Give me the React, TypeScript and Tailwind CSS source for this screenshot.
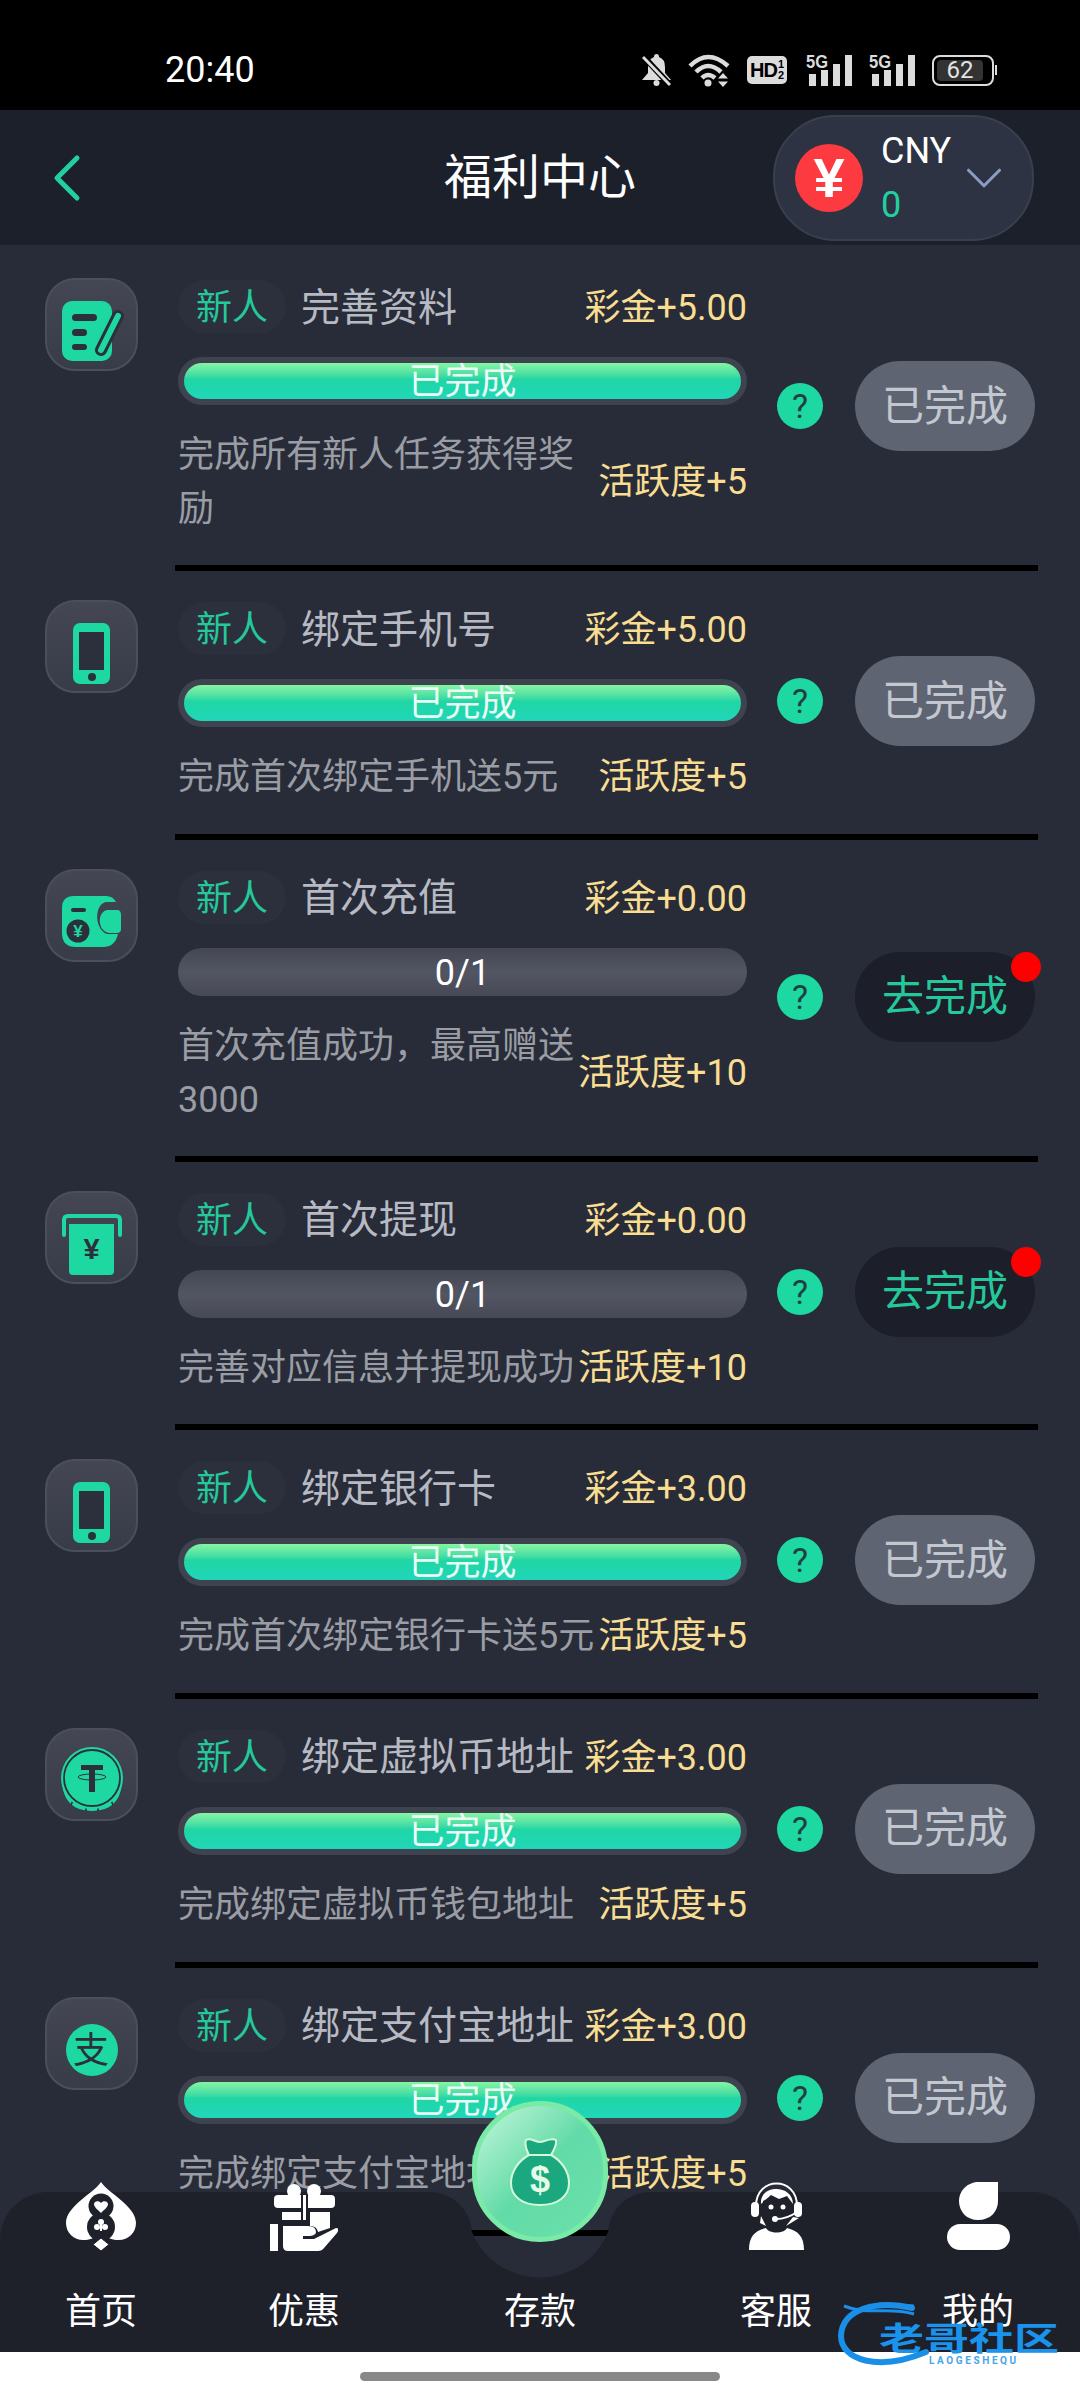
import { ChevronLeft, ChevronDown } from "lucide-react";
import type { ReactNode } from "react";

const GREEN = "#1ed8a2";
const DARK = "#2b303c";

const font = "font-['Roboto','Noto_Sans_CJK_SC',sans-serif]";

const DocIcon = () => (
  <svg viewBox="0 0 93 93" className="w-full h-full">
    <rect x="17" y="23" width="50" height="60" rx="10" fill={GREEN} />
    <rect x="27" y="36" width="25" height="7" rx="3.5" fill={DARK} />
    <rect x="27" y="51" width="15" height="7" rx="3.5" fill={DARK} />
    <rect x="27" y="66" width="15" height="6" rx="3" fill={DARK} />
    <path d="M73 38 L56 72" stroke={DARK} strokeWidth="12" strokeLinecap="round" />
    <path d="M73 38 L56 72" stroke={GREEN} strokeWidth="6" strokeLinecap="round" />
  </svg>
);

const PhoneIcon = () => (
  <svg viewBox="0 0 93 93" className="w-full h-full">
    <rect x="28" y="23" width="37" height="61" rx="7" fill={GREEN} />
    <rect x="34" y="32" width="25" height="38" fill={DARK} />
    <circle cx="47" cy="77" r="4" fill={DARK} />
  </svg>
);

const WalletIcon = () => (
  <svg viewBox="0 0 93 93" className="w-full h-full">
    <path
      d="M29 27 H61 Q68 27 71 33 H62 C50 33 48 59 62 65 H73 Q70 78 58 78 H31 Q17 78 17 64 V39 Q17 27 29 27Z"
      fill={GREEN}
    />
    <rect x="26" y="39" width="15" height="4" rx="2" fill={DARK} />
    <circle cx="33" cy="62" r="14" fill={GREEN} />
    <circle cx="33" cy="62" r="11.5" fill={DARK} />
    <text x="33" y="68" textAnchor="middle" fontSize="17" fontWeight="700" fill={GREEN} fontFamily="Liberation Sans">
      ¥
    </text>
    <path d="M62 41 H72 Q76 41 76 46 V60 Q76 64 72 64 H64 C52 62 52 43 62 41Z" fill={GREEN} />
  </svg>
);

const AtmIcon = () => (
  <svg viewBox="0 0 93 93" className="w-full h-full">
    <path
      d="M19 44 V29 Q19 25 23 25 H71 Q75 25 75 29 V44"
      fill="none"
      stroke={GREEN}
      strokeWidth="4"
      strokeLinecap="round"
    />
    <path d="M24 33 H69 V80 Q69 84 65 84 H28 Q24 84 24 80Z" fill={GREEN} />
    <text x="46.5" y="68" textAnchor="middle" fontSize="29" fontWeight="700" fill={DARK} fontFamily="Liberation Sans">
      ¥
    </text>
  </svg>
);

const TetherIcon = () => (
  <svg viewBox="0 0 93 93" className="w-full h-full">
    <path d="M17 56 Q20 83 47 83 Q74 83 77 56Z" fill={GREEN} />
    <path d="M29 70 L26 77 M41 75 V83 M53 75 V83 M65 70 L68 77" stroke={DARK} strokeWidth="1.6" />
    <circle cx="47" cy="50" r="31" fill={GREEN} />
    <circle cx="47" cy="50" r="28" fill="none" stroke={DARK} strokeWidth="1.8" />
    <rect x="36" y="37" width="22" height="5" fill={DARK} />
    <rect x="44" y="37" width="6" height="27" fill={DARK} />
    <ellipse cx="47" cy="49" rx="14" ry="3" fill="none" stroke={DARK} strokeWidth="1" />
  </svg>
);

const AlipayIcon = () => (
  <svg viewBox="0 0 93 93" className="w-full h-full">
    <circle cx="47" cy="53" r="26" fill={GREEN} />
    <text x="46" y="66" textAnchor="middle" fontSize="36" fill={DARK} fontFamily="Noto Sans CJK SC">
      支
    </text>
  </svg>
);

type Task = {
  title: string;
  bonus: string;
  desc: string;
  active: string;
  done: boolean;
  icon: ReactNode;
  multi?: boolean;
};

const tasks: Task[] = [
  { title: "完善资料", bonus: "彩金+5.00", desc: "完成所有新人任务获得奖励", active: "活跃度+5", done: true, icon: <DocIcon />, multi: true },
  { title: "绑定手机号", bonus: "彩金+5.00", desc: "完成首次绑定手机送5元", active: "活跃度+5", done: true, icon: <PhoneIcon /> },
  { title: "首次充值", bonus: "彩金+0.00", desc: "首次充值成功，最高赠送3000", active: "活跃度+10", done: false, icon: <WalletIcon />, multi: true },
  { title: "首次提现", bonus: "彩金+0.00", desc: "完善对应信息并提现成功", active: "活跃度+10", done: false, icon: <AtmIcon /> },
  { title: "绑定银行卡", bonus: "彩金+3.00", desc: "完成首次绑定银行卡送5元", active: "活跃度+5", done: true, icon: <PhoneIcon /> },
  { title: "绑定虚拟币地址", bonus: "彩金+3.00", desc: "完成绑定虚拟币钱包地址", active: "活跃度+5", done: true, icon: <TetherIcon /> },
  { title: "绑定支付宝地址", bonus: "彩金+3.00", desc: "完成绑定支付宝地址", active: "活跃度+5", done: true, icon: <AlipayIcon /> },
];

const Progress = ({ done }: { done: boolean }) =>
  done ? (
    <div className="relative h-[48px] rounded-full bg-[#3f4350] p-[6px] mt-[24px]">
      <div className="h-full rounded-full bg-gradient-to-b from-[#84f5a2] via-[#20d6a4] via-45% to-[#20d6b9]" />
      <span className="absolute inset-0 pt-[2px] flex items-center justify-center text-[36px] text-[#eafaf5] leading-none">
        已完成
      </span>
    </div>
  ) : (
    <div className="h-[48px] pt-[2px] rounded-full bg-gradient-to-b from-[#444753] via-[#525562] to-[#474a56] mt-[24px] flex items-center justify-center text-[36px] text-white leading-none">
      0/1
    </div>
  );

const TaskRow = ({ task }: { task: Task }) => (
  <div className="flex pl-[45px]">
    <div className="w-[93px] h-[93px] mt-[29px] shrink-0 rounded-[30px] border-2 border-[#4b4e5b] bg-gradient-to-b from-[#444753] to-[#383b48]">
      <div className="-m-[2px] w-[93px] h-[93px]">{task.icon}</div>
    </div>
    <div
      className={`ml-[37px] w-[863px] pl-[3px] pt-[31px] flex items-center border-b-[6px] border-black ${
        task.multi ? "pb-[29px]" : "pb-[29.67px]"
      }`}
    >
      <div className="w-[569px] shrink-0">
        <div className="flex items-center justify-between h-[53px]">
          <div className="flex items-center">
            <span className="w-[108px] h-[53px] pt-[3px] rounded-full bg-[#2c303c] flex items-center justify-center text-[36px] text-[#25c89b]">
              新人
            </span>
            <span className="ml-[15px] pt-[3px] text-[39px] text-[#b7bac3] leading-none">{task.title}</span>
          </div>
          <span className="pt-[3px] text-[36px] text-[#f8dd92] leading-none">{task.bonus}</span>
        </div>
        <Progress done={task.done} />
        <div className="flex items-center justify-between mt-[23px]">
          <p className="w-[425px] text-[36px] leading-[54px] text-[#9b9da5] break-all">{task.desc}</p>
          <span className="text-[36px] text-[#f8dd92] leading-none whitespace-nowrap">{task.active}</span>
        </div>
      </div>
      <div className="-mt-[4px] ml-[30px] w-[46px] h-[46px] shrink-0 rounded-full bg-[#1ed8a2] flex items-center justify-center text-[34px] text-[#22403f] leading-none">
        ?
      </div>
      {task.done ? (
        <button className="-mt-[4px] ml-[32px] w-[180px] h-[90px] shrink-0 rounded-full bg-[#5f6472] text-[42px] text-[#c3c8d0]">
          已完成
        </button>
      ) : (
        <button className="relative -mt-[4px] ml-[32px] w-[180px] h-[90px] shrink-0 rounded-full bg-[#1c1f2a] text-[42px] text-[#25c89b]">
          去完成
          <span className="absolute right-[-6px] top-0 w-[30px] h-[30px] rounded-full bg-[#ff0000]" />
        </button>
      )}
    </div>
  </div>
);

const StatusIcons = () => (
  <div className="ml-auto flex items-center">
    <svg viewBox="0 0 29 32" className="w-[29px] h-[32px]" fill="#dcdcdc">
      <path d="M14.5 0 Q17 0 17 3 Q23 5 23 13 V19 L29 26 H0 L6 19 V13 Q6 5 12 3 Q12 0 14.5 0Z" />
      <circle cx="14.5" cy="29" r="3" />
      <path d="M1 2 L28 31" stroke="#000" strokeWidth="6" />
      <path d="M1 3 L28 31" stroke="#dcdcdc" strokeWidth="3" />
    </svg>
    <svg viewBox="0 0 42 33" className="ml-[17px] w-[42px] h-[33px]" fill="none" stroke="#dcdcdc" strokeWidth="4.5">
      <path d="M2 12 Q20 -6 40 12" />
      <path d="M8 18 Q20 6 33 18" />
      <path d="M14 24 Q20 18 27 24" />
      <circle cx="20" cy="29" r="3.5" fill="#dcdcdc" stroke="none" />
      <path d="M35 19 L40 24.5 H30Z M30 27.5 H40 L35 33Z" fill="#dcdcdc" stroke="none" />
    </svg>
    <div className="ml-[17px] w-[40px] h-[28px] rounded-[5px] bg-[#dcdcdc] flex items-center justify-center text-black font-bold text-[20px] leading-none tracking-[-1px] font-['Liberation_Sans',sans-serif]">
      HD
      <span className="ml-[1px] flex flex-col text-[11px] leading-[11px] tracking-normal">
        <span>1</span>
        <span>2</span>
      </span>
    </div>
    <Signal className="ml-[19px]" />
    <Signal className="ml-[17px]" />
    <div className="ml-[17px] flex items-center">
      <div className="w-[62px] h-[31px] rounded-[8px] border-2 border-[#dcdcdc] p-[3px]">
        <div className="w-[46px] h-full rounded-[4px] bg-[#333] flex items-center justify-center text-[24px] text-[#e4e4e4] leading-none">
          62
        </div>
      </div>
      <div className="ml-[1px] w-[2px] h-[10px] bg-[#dcdcdc]" />
    </div>
  </div>
);

const Signal = ({ className }: { className: string }) => (
  <svg viewBox="0 0 46 32" className={`${className} w-[46px] h-[32px] overflow-visible`} fill="#dcdcdc">
    <text x="0" y="14" fontSize="18" fontWeight="700" fontFamily="Liberation Sans" textLength="22" lengthAdjust="spacingAndGlyphs">
      5G
    </text>
    <rect x="3" y="20" width="7" height="12" />
    <rect x="15" y="16" width="7" height="16" />
    <rect x="27" y="10" width="7" height="22" />
    <rect x="39" y="1" width="7" height="31" />
  </svg>
);

const SpadeIcon = () => (
  <svg viewBox="0 0 70 70" className="w-[70px] h-[70px]">
    <path
      d="M35 0 C28 11 0 24 0 41 C0 51 8 58 17 58 C24 58 28 56 31 53 H39 C42 56 46 58 53 58 C62 58 70 51 70 41 C70 24 42 11 35 0Z"
      fill="#fff"
    />
    <circle cx="35" cy="24" r="12.5" fill="#1f212a" />
    <circle cx="35" cy="45" r="14" fill="#1f212a" />
    <path d="M35 31 C31 27 28 25 28 22 C28 19 33 18 35 21 C37 18 42 19 42 22 C42 25 39 27 35 31Z" fill="#fff" />
    <circle cx="35" cy="40" r="3" fill="#fff" />
    <circle cx="31" cy="45" r="3" fill="#fff" />
    <circle cx="39" cy="45" r="3" fill="#fff" />
    <rect x="34" y="42" width="2" height="7" fill="#fff" />
    <path d="M35 56 L43 62.5 L35 69 L27 62.5Z" fill="#fff" stroke="#1f212a" strokeWidth="1" />
  </svg>
);

const GiftIcon = () => (
  <svg viewBox="0 0 68 70" className="w-[68px] h-[70px]" fill="#fff">
    <circle cx="24" cy="9" r="7" />
    <circle cx="44" cy="9" r="7" />
    <path d="M8 13 H31 V26 H8 Q4 26 4 22 V17 Q4 13 8 13Z" />
    <path d="M38 13 H61 Q65 13 65 17 V22 Q65 26 61 26 H38Z" />
    <path d="M12 30 H31 V38 H12Z" />
    <path d="M33 13 H36 V38 H33Z" />
    <path d="M40 30 H60 V46 L48 50 Q47 44 40 44Z" />
    <rect x="0" y="42" width="8" height="27" />
    <path d="M13 44 H38 Q46 44 46 50 Q46 53 40 54 H33 V57 H44 L66 46 Q70 46 67 51 L54 66 Q52 69 48 69 H18 Q13 69 13 64Z" />
  </svg>
);

const HeadsetIcon = () => (
  <svg viewBox="0 0 55 68" className="w-[55px] h-[68px]">
    <path d="M7 24 C7 -6 48 -6 48 24" fill="none" stroke="#fff" strokeWidth="2" />
    <rect x="2" y="20" width="8" height="15" rx="4" fill="#fff" />
    <rect x="45" y="20" width="8" height="15" rx="4" fill="#fff" />
    <path d="M12 22 C10 2 44 2 44 22 L38 14 L30 17 L22 13Z" fill="#fff" />
    <path d="M14 19 L22 15 L30 18 L38 16 L42 20 V30 C42 42 33 46 28 46 C23 46 14 42 14 30Z" fill="#1f212a" />
    <circle cx="22" cy="25" r="2.5" fill="#fff" />
    <circle cx="34" cy="25" r="2.5" fill="#fff" />
    <path d="M12 34 L17 44 L11 41Z M44 35 L50 36 L37 44Z" fill="#fff" />
    <path d="M27 37 Q38 37 48 30" fill="none" stroke="#fff" strokeWidth="1.8" />
    <circle cx="26" cy="37" r="3" fill="#fff" />
    <path d="M0 68 C0 54 6 49 17 46 C20 52 35 52 38 46 C49 49 55 54 55 68Z" fill="#fff" />
  </svg>
);

const PersonIcon = () => (
  <svg viewBox="0 0 63 68" className="w-[63px] h-[68px]" fill="#fff">
    <path d="M32 0 H51 V19 C51 30 43 38 31 38 C20 38 12 30 12 19 C12 8 21 0 32 0Z" />
    <rect x="0" y="42" width="63" height="26" rx="13" />
  </svg>
);

const MoneyBag = () => (
  <svg viewBox="0 0 60 70" className="w-[60px] h-[70px]">
    <path
      d="M16 3 C20 0 25 5 30 5 C34 5 41 0 46 3 C47 9 43 14 41 18 C52 24 59 35 59 46 C59 60 47 68 30 68 C13 68 1 60 1 46 C1 35 8 24 19 18 C17 14 14 9 16 3Z"
      fill="#1ba87e"
      stroke="#d4f7d8"
      strokeWidth="2"
    />
    <path d="M17 18 H43" stroke="#d4f7d8" strokeWidth="2" />
    <text x="30" y="55" textAnchor="middle" fontSize="36" fontWeight="700" fill="#e4fbe6" fontFamily="Liberation Sans">
      $
    </text>
  </svg>
);

const NavItem = ({ label, icon }: { label: string; icon: ReactNode }) => (
  <div className="w-[80px] flex flex-col items-center -mt-[10px]">
    <div className="h-[70px] flex items-start justify-center">{icon}</div>
    <span className="mt-[38px] text-[36px] leading-[44px] text-white whitespace-nowrap">{label}</span>
  </div>
);

export default function App() {
  return (
    <div className={`relative h-[2400px] w-[1080px] overflow-hidden bg-white flex flex-col ${font}`}>
      <div className="h-[110px] shrink-0 bg-black pl-[165px] pr-[83px] pt-[30px] flex items-center">
        <span className="text-[36px] text-white leading-none">20:40</span>
        <StatusIcons />
      </div>

      <header className="h-[135px] shrink-0 bg-[#1c202b] grid grid-cols-[1fr_auto_1fr] items-center">
        <ChevronLeft className="ml-[27px] w-[80px] h-[80px] text-[#22cfa0]" strokeWidth={1.5} />
        <h1 className="text-[48px] font-normal text-white leading-none">福利中心</h1>
        <div className="justify-self-end mr-[46px] w-[261px] h-[126px] rounded-[62px] bg-[#2d3342] border-2 border-[#3a3f4f] flex items-center pl-[20px]">
          <div className="w-[68px] h-[68px] shrink-0 rounded-full bg-[#fd3a3f] flex items-center justify-center text-[56px] font-bold text-white leading-none font-['Liberation_Sans',sans-serif]">
            ¥
          </div>
          <div className="ml-[18px] w-[72px] shrink-0 text-[36px] leading-[54px]">
            <div className="text-white">CNY</div>
            <div className="text-[#22cfa0]">0</div>
          </div>
          <ChevronDown className="w-[62px] h-[62px] shrink-0 text-[#8a9cc4]" strokeWidth={1.2} />
        </div>
      </header>

      <main className="flex-1 min-h-0 overflow-hidden bg-[#272c38] pt-[4px]">
        {tasks.map((t) => (
          <TaskRow key={t.title} task={t} />
        ))}
      </main>

      <div className="h-[48px] shrink-0 bg-white flex items-center justify-center">
        <div className="w-[360px] h-[9px] rounded-full bg-[#888888]" />
      </div>

      <nav className="absolute left-0 right-0 bottom-[48px] h-[160px] flex">
        <div className="w-[472px] bg-[#1f212a] rounded-tl-[48px] rounded-tr-[42px] flex pl-[61px] gap-[123px]">
          <NavItem label="首页" icon={<SpadeIcon />} />
          <NavItem label="优惠" icon={<GiftIcon />} />
        </div>
        <div className="relative w-[136px] bg-[radial-gradient(circle_at_68px_12px,transparent_73px,#1f212a_74px)] flex flex-col items-center">
          <div className="absolute -top-[91px] w-[136px] h-[141px] rounded-full bg-gradient-to-br from-[#c0f7dc] via-[#62dba8] to-[#6ce0ab] border-[5px] border-[#7aeba6] flex items-center justify-center">
            <MoneyBag />
          </div>
          <span className="mt-[98px] text-[36px] leading-[44px] text-white whitespace-nowrap">存款</span>
        </div>
        <div className="w-[472px] bg-[#1f212a] rounded-tl-[42px] rounded-tr-[48px] flex pl-[128px] gap-[122px]">
          <NavItem label="客服" icon={<HeadsetIcon />} />
          <NavItem label="我的" icon={<PersonIcon />} />
        </div>
      </nav>

      <div className="absolute left-[838px] top-[2300px] w-[226px] h-[72px]">
        <svg viewBox="0 0 226 72" className="absolute inset-0 w-full h-full" fill="none">
          <path d="M74 8 C40 0 4 8 3 36 C3 60 40 72 88 52" stroke="#1a8fe8" strokeWidth="6" strokeLinecap="round" />
          <path d="M6 6 C30 16 50 6 76 14 M40 4 L76 6" stroke="#1a8fe8" strokeWidth="3" />
        </svg>
        <span className="absolute left-[41px] top-[21px] text-[45px] leading-[36px] font-bold whitespace-nowrap text-[#1a93ec] scale-y-[0.72]">
          老哥社区
        </span>
        <span className="absolute left-[91px] top-[57px] text-[10px] leading-[8px] font-bold tracking-[2.6px] whitespace-nowrap text-[#4aa5e8]">
          LAOGESHEQU
        </span>
      </div>
    </div>
  );
}
